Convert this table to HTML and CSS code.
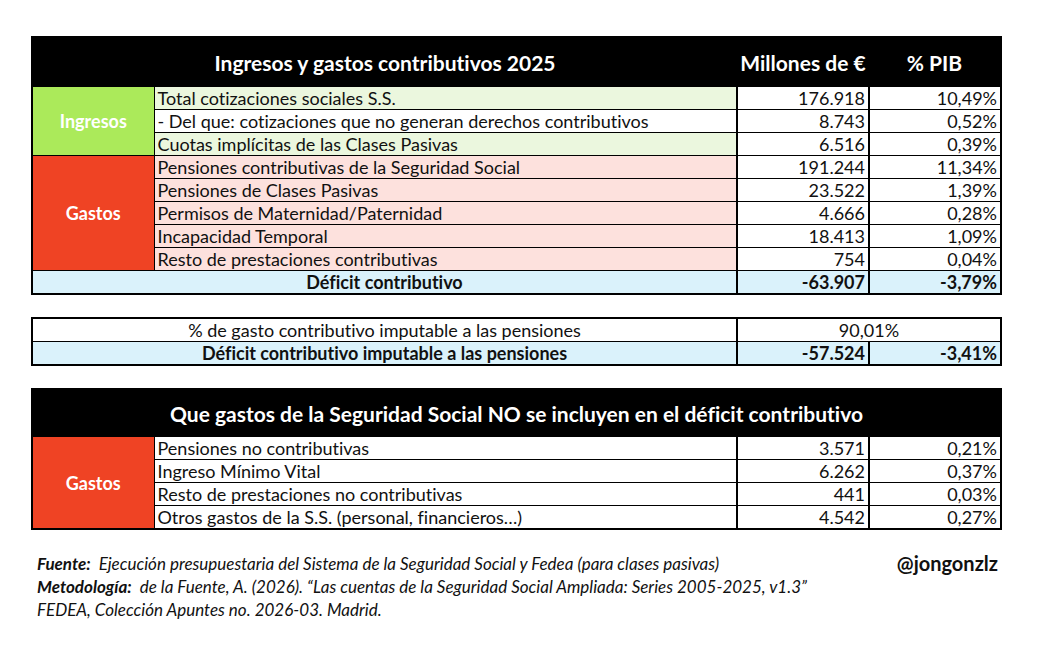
FILE: index.html
```html
<!DOCTYPE html>
<html lang="es">
<head>
<meta charset="utf-8">
<title>Ingresos y gastos contributivos 2025</title>
<link rel="stylesheet" href="styles.css">
</head>
<body>
<div class="page">
  <table class="sheet">
    <colgroup><col class="c-label"><col class="c-desc"><col class="c-num"><col class="c-num"></colgroup>
    <tr class="head">
      <th colspan="2">Ingresos y gastos contributivos 2025</th>
      <th>Millones de €</th>
      <th>% PIB</th>
    </tr>
    <tr>
      <td class="label green" rowspan="3">Ingresos</td>
      <td class="desc lgreen">Total cotizaciones sociales S.S.</td>
      <td class="num">176.918</td><td class="num">10,49%</td>
    </tr>
    <tr>
      <td class="desc">- Del que: cotizaciones que no generan derechos contributivos</td>
      <td class="num">8.743</td><td class="num">0,52%</td>
    </tr>
    <tr>
      <td class="desc lgreen">Cuotas implícitas de las Clases Pasivas</td>
      <td class="num">6.516</td><td class="num">0,39%</td>
    </tr>
    <tr>
      <td class="label red" rowspan="5">Gastos</td>
      <td class="desc pink">Pensiones contributivas de la Seguridad Social</td>
      <td class="num">191.244</td><td class="num">11,34%</td>
    </tr>
    <tr>
      <td class="desc pink">Pensiones de Clases Pasivas</td>
      <td class="num">23.522</td><td class="num">1,39%</td>
    </tr>
    <tr>
      <td class="desc pink">Permisos de Maternidad/Paternidad</td>
      <td class="num">4.666</td><td class="num">0,28%</td>
    </tr>
    <tr>
      <td class="desc pink">Incapacidad Temporal</td>
      <td class="num">18.413</td><td class="num">1,09%</td>
    </tr>
    <tr>
      <td class="desc pink">Resto de prestaciones contributivas</td>
      <td class="num">754</td><td class="num">0,04%</td>
    </tr>
    <tr class="total">
      <td class="center" colspan="2">Déficit contributivo</td>
      <td class="num">-63.907</td><td class="num">-3,79%</td>
    </tr>
  </table>

  <table class="sheet second">
    <colgroup><col class="c-label"><col class="c-desc"><col class="c-num"><col class="c-num"></colgroup>
    <tr>
      <td class="center plain" colspan="2">% de gasto contributivo imputable a las pensiones</td>
      <td class="center plain" colspan="2">90,01%</td>
    </tr>
    <tr class="total">
      <td class="center" colspan="2">Déficit contributivo imputable a las pensiones</td>
      <td class="num">-57.524</td><td class="num">-3,41%</td>
    </tr>
  </table>

  <table class="sheet third">
    <colgroup><col class="c-label"><col class="c-desc"><col class="c-num"><col class="c-num"></colgroup>
    <tr class="head head2">
      <th colspan="4">Que gastos de la Seguridad Social NO se incluyen en el déficit contributivo</th>
    </tr>
    <tr>
      <td class="label red" rowspan="4">Gastos</td>
      <td class="desc">Pensiones no contributivas</td>
      <td class="num">3.571</td><td class="num">0,21%</td>
    </tr>
    <tr>
      <td class="desc">Ingreso Mínimo Vital</td>
      <td class="num">6.262</td><td class="num">0,37%</td>
    </tr>
    <tr>
      <td class="desc">Resto de prestaciones no contributivas</td>
      <td class="num">441</td><td class="num">0,03%</td>
    </tr>
    <tr>
      <td class="desc">Otros gastos de la S.S. (personal, financieros…)</td>
      <td class="num">4.542</td><td class="num">0,27%</td>
    </tr>
  </table>

  <div class="footer">
    <div class="notes">
      <p><b>Fuente:</b>&nbsp; Ejecución presupuestaria del Sistema de la Seguridad Social y Fedea (para clases pasivas)</p>
      <p><b>Metodología:</b>&nbsp; de la Fuente, A. (2026). “Las cuentas de la Seguridad Social Ampliada: Series 2005-2025, v1.3”</p>
      <p>FEDEA, Colección Apuntes no. 2026-03. Madrid.</p>
    </div>
    <div class="handle">@jongonzlz</div>
  </div>
</div>
</body>
</html>
```

FILE: styles.css
```css
html, body {
  margin: 0;
  padding: 0;
  background: #ffffff;
}

body {
  font-family: Lato, "Open Sans", "Liberation Sans", sans-serif;
  font-variant-ligatures: none;
  color: #111111;
}

.page {
  padding: 36px 0 0 31px;
  width: 970px;
}

.sheet {
  border-collapse: collapse;
  width: 970px;
  table-layout: fixed;
  border: 2px solid #000;
  font-size: 18px;
}

.c-label { width: 122px; }
.c-desc { width: 583px; }
.c-num { width: 132px; }

.sheet td {
  border: 1px solid #000;
  height: 22px;
  padding: 0 3px;
  line-height: 22px;
  white-space: nowrap;
  overflow: hidden;
}

.head th {
  background: #000;
  color: #fff;
  font-weight: 700;
  font-size: 21px;
  height: 48px;
  padding: 0;
  border: none;
  text-align: center;
}

.head2 th { height: 46px; }

.label {
  color: #fff;
  font-weight: 700;
  text-align: center;
}

.green { background: #abea5a; }
.red { background: #ef4324; }
.lgreen { background: #ebf7de; }
.pink { background: #fde1dd; }

.sheet td.num {
  text-align: right;
  border-left: 2px solid #000;
  border-right: 2px solid #000;
}

.center { text-align: center; }

.total td {
  background: #daf2fb;
  font-weight: 700;
}

.second { margin-top: 22px; }
.second td.plain { background: #fff; }
.second td.plain + td.plain { border-left: 2px solid #000; }
.third { margin-top: 22px; }

.footer {
  display: flex;
  justify-content: space-between;
  align-items: flex-start;
  margin-top: 22px;
  padding-left: 6px;
}

.notes p {
  margin: 0;
  font-size: 17px;
  font-style: italic;
  line-height: 23px;
}

.notes b { font-weight: 700; }

.handle {
  font-weight: 700;
  font-size: 20px;
  line-height: 23px;
  padding-right: 3px;
}
```
